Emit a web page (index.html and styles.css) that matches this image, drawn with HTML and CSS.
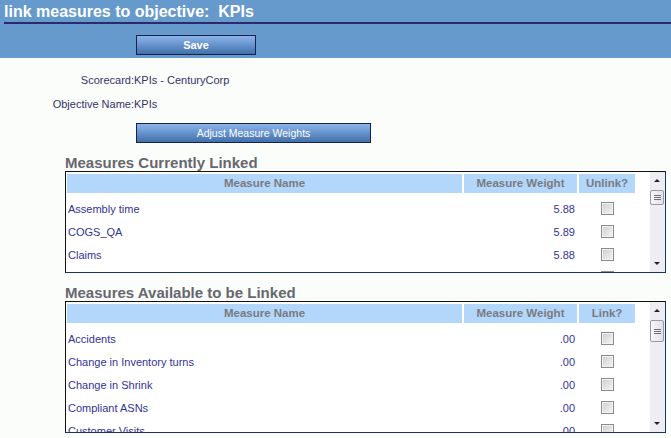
FILE: index.html
```html
<!DOCTYPE html>
<html>
<head>
<meta charset="utf-8">
<title>link measures to objective</title>
<link rel="stylesheet" href="styles.css">
</head>
<body>
<div class="top">
  <h1 class="title">link measures to objective:&nbsp; KPIs</h1>
  <div class="save-row"><button class="btn btn-save">Save</button></div>
</div>
<div class="content">
  <div class="info">
    <span class="lbl">Scorecard:</span><span class="val">KPIs - CenturyCorp</span>
    <span class="lbl">Objective Name:</span><span class="val">KPIs</span>
  </div>
  <button class="btn btn-adjust">Adjust Measure Weights</button>

  <h2 class="section-title">Measures Currently Linked</h2>
  <div class="box box-linked">
    <div class="list">
      <div class="grid head"><span>Measure Name</span><span>Measure Weight</span><span>Unlink?</span></div>
      <div class="grid row"><span class="name">Assembly time</span><span class="wt">5.88</span><span class="chk-cell"><span class="chk"></span></span></div>
      <div class="grid row"><span class="name">COGS_QA</span><span class="wt">5.89</span><span class="chk-cell"><span class="chk"></span></span></div>
      <div class="grid row"><span class="name">Claims</span><span class="wt">5.88</span><span class="chk-cell"><span class="chk"></span></span></div>
      <div class="grid row"><span class="name"></span><span class="wt"></span><span class="chk-cell"><span class="chk"></span></span></div>
    </div>
    <div class="sb">
      <div class="sb-btn"><span class="arrow-up"></span></div>
      <div class="thumb thumb-short"><i></i><i></i><i></i></div>
      <div class="sb-space"></div>
      <div class="sb-btn"><span class="arrow-down"></span></div>
    </div>
  </div>

  <h2 class="section-title">Measures Available to be Linked</h2>
  <div class="box box-avail">
    <div class="list">
      <div class="grid head"><span>Measure Name</span><span>Measure Weight</span><span>Link?</span></div>
      <div class="grid row"><span class="name">Accidents</span><span class="wt">.00</span><span class="chk-cell"><span class="chk"></span></span></div>
      <div class="grid row"><span class="name">Change in Inventory turns</span><span class="wt">.00</span><span class="chk-cell"><span class="chk"></span></span></div>
      <div class="grid row"><span class="name">Change in Shrink</span><span class="wt">.00</span><span class="chk-cell"><span class="chk"></span></span></div>
      <div class="grid row"><span class="name">Compliant ASNs</span><span class="wt">.00</span><span class="chk-cell"><span class="chk"></span></span></div>
      <div class="grid row"><span class="name">Customer Visits</span><span class="wt">.00</span><span class="chk-cell"><span class="chk"></span></span></div>
    </div>
    <div class="sb">
      <div class="sb-btn"><span class="arrow-up"></span></div>
      <div class="thumb thumb-long"><i></i><i></i><i></i></div>
      <div class="sb-space"></div>
      <div class="sb-btn"><span class="arrow-down"></span></div>
    </div>
  </div>
</div>
</body>
</html>
```

FILE: styles.css
```css
* { box-sizing: border-box; }

body {
  margin: 0;
  background: #fbfdfb;
  font-family: "Liberation Sans", Arial, sans-serif;
  font-size: 11px;
}

.top {
  background: #6699cc;
  padding-bottom: 3px;
}

.title {
  margin: 0 0 0 4px;
  padding-top: 1px;
  line-height: 21px;
  font-size: 16px;
  font-weight: bold;
  color: #ffffff;
  border-bottom: 2px solid #2b2b6b;
}

.save-row {
  padding: 11px 0 0 136px;
}

.btn {
  display: block;
  height: 20px;
  padding: 0;
  border: 1px solid #16214c;
  background: linear-gradient(#8cb4ea, #6a96cf 45%, #4270a8);
  color: #ffffff;
  font-family: inherit;
  line-height: 18px;
  text-align: center;
}

.btn-save {
  width: 120px;
  font-size: 11px;
  font-weight: bold;
}

.content {
  padding-top: 16px;
}

.info {
  display: grid;
  grid-template-columns: 134px auto;
  row-gap: 11px;
  line-height: 13px;
  color: #33336a;
}

.info .lbl {
  text-align: right;
}

.btn-adjust {
  width: 235px;
  margin: 12px 0 0 136px;
  font-size: 10.5px;
}

.section-title {
  margin: 11px 0 0 65px;
  font-size: 15px;
  line-height: 17px;
  font-weight: bold;
  color: #67676f;
}

.box {
  margin-left: 65px;
  width: 601px;
  display: flex;
  border: 1px solid #111111;
  border-right-color: #1b3460;
  border-bottom-color: #1b3460;
  background: #ffffff;
}

.box-linked { height: 102px; }
.box-avail { height: 132px; }

.list {
  flex: 1;
  overflow: hidden;
  padding: 2px 0 0 1px;
}

.grid {
  display: grid;
  grid-template-columns: 395px 113px 56px;
  column-gap: 2px;
}

.head {
  height: 19px;
  line-height: 19px;
  margin-bottom: 4px;
}

.head span {
  background: #b3d7fb;
  text-align: center;
  font-weight: bold;
  font-size: 11.5px;
  color: #7a7a82;
}

.row {
  height: 23px;
  align-items: center;
  color: #333399;
}

.name { padding-left: 1px; white-space: nowrap; }
.wt { text-align: right; padding-right: 2px; }

.chk-cell {
  display: flex;
  justify-content: center;
}

.chk {
  width: 13px;
  height: 13px;
  border: 1px solid #8c8c8c;
  background: linear-gradient(135deg, #cdcdcd, #f6f6f6);
  box-shadow: inset 0 0 0 1px #f2f2f2;
}

.sb {
  width: 16px;
  display: flex;
  flex-direction: column;
  background: #eeedf1;
  border-left: 1px solid #fbfbfb;
}

.sb-btn {
  height: 17px;
  display: flex;
  align-items: center;
  justify-content: center;
  padding-right: 1px;
}

.arrow-up {
  width: 0;
  height: 0;
  border-left: 3px solid transparent;
  border-right: 3px solid transparent;
  border-bottom: 3px solid #222222;
}

.arrow-down {
  width: 0;
  height: 0;
  border-left: 3px solid transparent;
  border-right: 3px solid transparent;
  border-top: 3px solid #222222;
}

.thumb {
  margin-top: 1px;
  width: 14px;
  border: 1px solid #9a9aa2;
  border-radius: 2px;
  background: linear-gradient(to right, #f7f7f9, #e0e0e6);
  display: flex;
  flex-direction: column;
  justify-content: center;
  align-items: center;
  gap: 1px;
}

.thumb i {
  display: block;
  width: 7px;
  height: 1px;
  background: #707078;
}

.thumb-short { height: 15px; }
.thumb-long { height: 22px; }

.sb-space { flex: 1; }
```
